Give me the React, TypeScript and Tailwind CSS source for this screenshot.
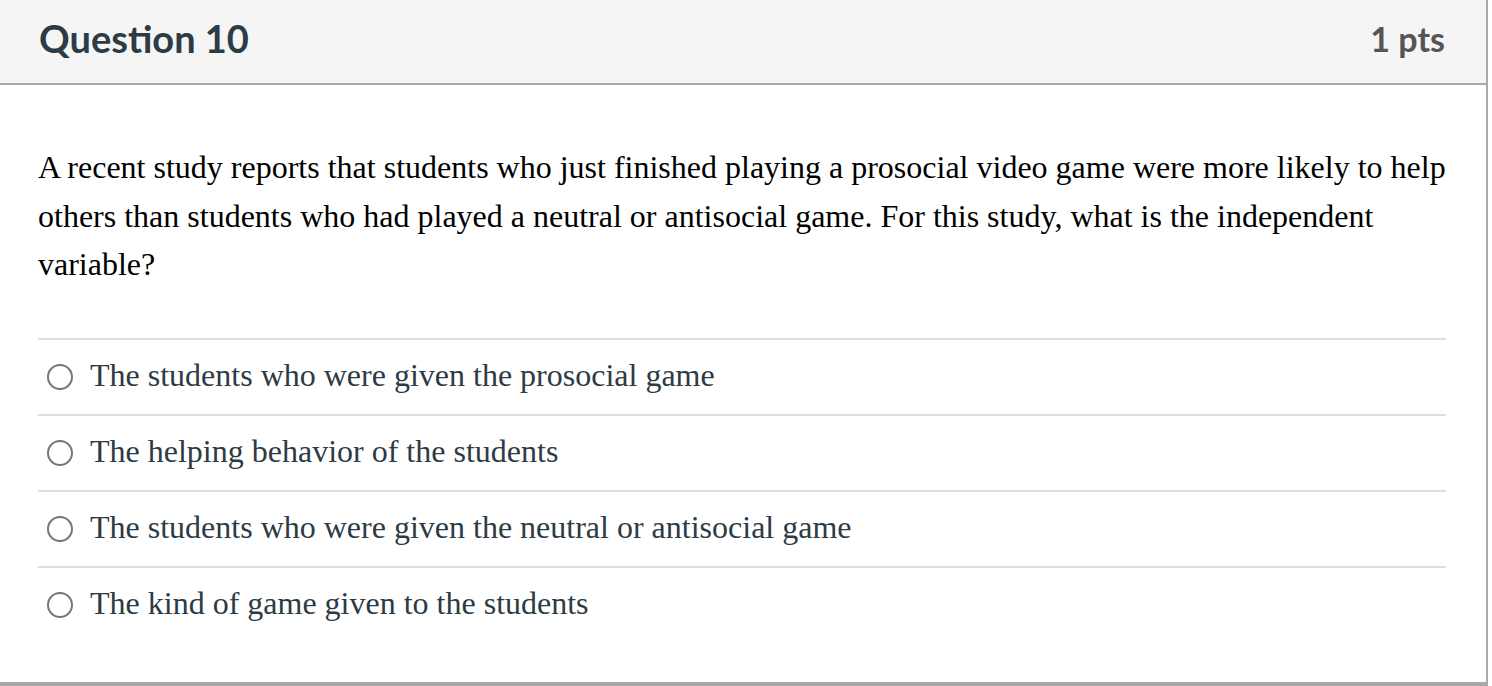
import React from 'react';

const answers = [
  'The students who were given the prosocial game',
  'The helping behavior of the students',
  'The students who were given the neutral or antisocial game',
  'The kind of game given to the students',
];

export default function App() {
  return (
    <div className="w-[1492px] h-[686px] bg-white overflow-hidden">
      <div className="w-[1488px] h-[686px] border-r-2 border-b-4 border-[#a9a9a9]">
        {/* Header */}
        <div className="h-[85px] bg-[#f5f5f5] border-b-2 border-[#a9a9a9] flex items-center justify-between pl-[39px] pr-[41px] pb-[6px] font-['Lato',sans-serif] font-bold">
          <span className="text-[38px] text-[#2d3b45]">Question 10</span>
          <span className="text-[34px] text-[#555555]">1 pts</span>
        </div>

        {/* Body */}
        <div className="pl-[38px] pr-[40px] pt-[58px] font-['Liberation_Serif',serif]">
          <p className="w-[1416px] text-[32px] leading-[48.5px] text-black">
            A recent study reports that students who just finished playing a prosocial video game were more likely to help
            others than students who had played a neutral or antisocial game. For this study, what is the independent
            variable?
          </p>

          <div className="mt-[49px]">
            {answers.map((a) => (
              <div key={a} className="border-t-2 border-[#dddddd] h-[76px] flex items-center">
                <span className="ml-[9px] w-[26px] h-[26px] rounded-full border-2 border-[#777777] bg-white shrink-0" />
                <span className="ml-[17px] mb-[4px] text-[32px] text-[#2d3b45]">{a}</span>
              </div>
            ))}
          </div>
        </div>
      </div>
    </div>
  );
}
